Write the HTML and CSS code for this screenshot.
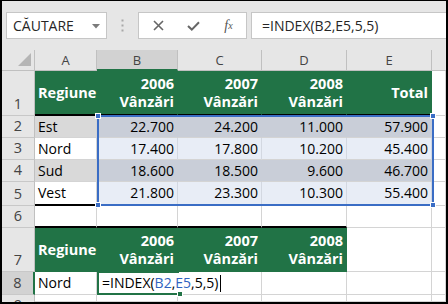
FILE: index.html
```html
<!DOCTYPE html>
<html>
<head>
<meta charset="utf-8">
<link rel="stylesheet" href="styles.css">
</head>
<body>
<div class="frame">
  <div class="toolbar">
    <div class="namebox">
      <span>CĂUTARE</span>
      <svg class="dd" width="8" height="5" viewBox="0 0 8 5"><path d="M0 0H8L4 4.5Z" fill="#7b7b7b"/></svg>
    </div>
    <div class="grip">
      <svg width="3" height="13" viewBox="0 0 3 13"><rect x="0.5" y="0.5" width="2" height="2" fill="#a8a8a8"/><rect x="0.5" y="5.5" width="2" height="2" fill="#a8a8a8"/><rect x="0.5" y="10.5" width="2" height="2" fill="#a8a8a8"/></svg>
    </div>
    <div class="fxbox">
      <span class="slot"><svg width="11" height="11" viewBox="0 0 11 11"><path d="M1 1L10 10M10 1L1 10" stroke="#666" stroke-width="1.6"/></svg></span>
      <span class="slot"><svg width="13" height="10" viewBox="0 0 13 10"><path d="M1 5L4.8 8.6L12 1.2" stroke="#666" stroke-width="2" fill="none"/></svg></span>
      <span class="slot fx">f<sub>x</sub></span>
    </div>
    <div class="formula">=INDEX(B2,E5,5,5)</div>
  </div>

  <div class="sheet">
    <!-- column headers -->
    <div class="corner"><svg width="14" height="14" viewBox="0 0 14 14"><path d="M13 0V13H0Z" fill="#b5b5b5"/></svg></div>
    <div class="hdr">A</div>
    <div class="hdr sel">B</div>
    <div class="hdr">C</div>
    <div class="hdr">D</div>
    <div class="hdr">E</div>
    <div class="hdr last"></div>

    <!-- row 1 -->
    <div class="rh">1</div>
    <div class="c g left tb">Regiune</div>
    <div class="c g num tb"><span class="two">2006<br>Vânzări</span></div>
    <div class="c g num tb"><span class="two">2007<br>Vânzări</span></div>
    <div class="c g num tb"><span class="two">2008<br>Vânzări</span></div>
    <div class="c g num tb">Total</div>
    <div class="c"></div>

    <!-- row 2 -->
    <div class="rh">2</div>
    <div class="c dk">Est</div>
    <div class="c num bd">22.700</div>
    <div class="c num bd">24.200</div>
    <div class="c num bd">11.000</div>
    <div class="c num bd">57.900</div>
    <div class="c"></div>

    <!-- row 3 -->
    <div class="rh">3</div>
    <div class="c">Nord</div>
    <div class="c num bl">17.400</div>
    <div class="c num bl">17.800</div>
    <div class="c num bl">10.200</div>
    <div class="c num bl">45.400</div>
    <div class="c"></div>

    <!-- row 4 -->
    <div class="rh">4</div>
    <div class="c dk">Sud</div>
    <div class="c num bd">18.600</div>
    <div class="c num bd">18.500</div>
    <div class="c num bd">9.600</div>
    <div class="c num bd">46.700</div>
    <div class="c"></div>

    <!-- row 5 -->
    <div class="rh">5</div>
    <div class="c tb">Vest</div>
    <div class="c num bl tb">21.800</div>
    <div class="c num bl tb">23.300</div>
    <div class="c num bl tb">10.300</div>
    <div class="c num bl tb">55.400</div>
    <div class="c"></div>

    <!-- row 6 -->
    <div class="rh">6</div>
    <div class="c tb"></div>
    <div class="c tb"></div>
    <div class="c tb"></div>
    <div class="c tb"></div>
    <div class="c"></div>
    <div class="c"></div>

    <!-- row 7 -->
    <div class="rh">7</div>
    <div class="c g left">Regiune</div>
    <div class="c g num"><span class="two">2006<br>Vânzări</span></div>
    <div class="c g num"><span class="two">2007<br>Vânzări</span></div>
    <div class="c g num"><span class="two">2008<br>Vânzări</span></div>
    <div class="c"></div>
    <div class="c"></div>

    <!-- row 8 -->
    <div class="rh rsel">8</div>
    <div class="c">Nord</div>
    <div class="c edit"><span class="edittext">=INDEX(<span class="ref">B2</span>,<span class="ref">E5</span>,5,5)<i class="caret"></i></span></div>
    <div class="c"></div>
    <div class="c"></div>
    <div class="c"></div>
    <div class="c"></div>

    <!-- row 9 -->
    <div class="rh cut">9</div>
    <div class="c"></div>
    <div class="c"></div>
    <div class="c"></div>
    <div class="c"></div>
    <div class="c"></div>
    <div class="c"></div>

    <!-- overlays -->
    <div class="range">
      <i class="h tl"></i><i class="h tr"></i><i class="h bl2"></i><i class="h br"></i>
    </div>
    <div class="active"><i class="fill"></i></div>
  </div>
</div>
</body>
</html>
```

FILE: styles.css
```css
* { box-sizing: border-box; margin: 0; padding: 0; }
body { margin: 0; background: #fff; font-family: "Open Sans", "Noto Sans", sans-serif; }

.frame {
  width: 448px; height: 304px;
  border: 2px solid #000; border-top-width: 1px;
  background: #fff; overflow: hidden;
  display: flex; flex-direction: column;
}

/* toolbar */
.toolbar {
  height: 49px; flex: none;
  background: #e6e6e6;
  display: flex; align-items: flex-start;
  padding: 11px 0 0 4px;
}
.namebox {
  width: 101px; height: 27px;
  background: #fff; border: 1px solid #c6c6c6;
  display: flex; align-items: center; justify-content: space-between;
  padding: 0 6px 0 6px;
  font-size: 14px; color: #262626;
}
.dd { margin-top: 1px; }
.grip { width: 31px; height: 27px; display: flex; align-items: center; justify-content: center; }
.fxbox {
  width: 109px; height: 27px;
  background: #fff; border: 1px solid #c6c6c6;
  display: flex; align-items: center; padding-left: 2px;
}
.slot { width: 35px; display: flex; justify-content: center; align-items: center; }
.fx {
  font-family: "Liberation Serif", serif; font-style: italic;
  font-size: 14px; color: #555; line-height: 1;
}
.fx sub { font-size: 10px; vertical-align: -1px; }
.formula {
  flex: 1; height: 27px; margin-left: 4px;
  background: #fff; border: 1px solid #c6c6c6; border-right: none;
  display: flex; align-items: center; padding-left: 10px;
  font-size: 14px; color: #262626;
}

/* sheet */
.sheet {
  position: relative;
  display: grid;
  grid-template-columns: 33px 62px 81px 84px 85px 85px 14px;
  grid-template-rows: 21px 45px 22px 22px 22px 24px 22px 44px 23px 7px;
  font-size: 14px; color: #000;
}
.corner {
  background: #e6e6e6;
  border-right: 1px solid #c0c0c0; border-bottom: 1px solid #c0c0c0;
  display: flex; align-items: flex-end; justify-content: flex-end;
  padding: 0 2px 3px 0;
}
.hdr {
  background: #e6e6e6;
  border-right: 1px solid #c0c0c0; border-bottom: 1px solid #c0c0c0;
  display: flex; align-items: center; justify-content: center;
  font-size: 13px; color: #444;
}
.hdr.sel { background: #d2d2d2; border-bottom: 2px solid #217346; }
.hdr.last { border-right: none; }
.rh {
  background: #e6e6e6;
  border-right: 1px solid #c0c0c0; border-bottom: 1px solid #c8c8c8;
  display: flex; align-items: flex-end; justify-content: center;
  padding-bottom: 1px; color: #444; line-height: 20px; font-size: 14.5px;
}
.rh.rsel { background: #d2d2d2; border-right: 2px solid #217346; }
.rh.cut { align-items: flex-start; overflow: hidden; padding: 0; border-bottom: none; }
.rh.cut::first-line { line-height: 20px; }

.c {
  border-right: 1px solid #d4d4d4; border-bottom: 1px solid #d4d4d4;
  display: flex; align-items: center;
  padding: 0 3px; white-space: nowrap; line-height: 20px;
}
.num { justify-content: flex-end; }
.g { background: #217346; color: #fff; font-weight: 700; font-size: 14.5px; border-right-color: #217346; border-bottom-color: #217346; }
.two { text-align: right; line-height: 18px; }
.dk { background: #d9d9d9; }
.bd { background: #c9ced8; border-right-color: #c9ced8; }
.bl { background: #e8edf6; border-right-color: #d3d8e1; }
.tb { border-bottom: 2px solid #000; }

.edit { overflow: visible; padding-left: 5px; }
.edittext { position: relative; z-index: 2; background: #fff; padding-right: 4px; display: flex; align-items: center; }
.ref { color: #2f63c0; }
.caret { display: inline-block; width: 1px; height: 17px; background: #000; margin-left: 2px; }

/* overlays */
.range {
  position: absolute; left: 95px; top: 65px; width: 337px; height: 91px;
  border: 2px solid #3a6dc5; z-index: 3;
}
.h { position: absolute; width: 6px; height: 6px; background: #3a6dc5; border: 1px solid #fff; }
.tl { left: -4px; top: -4px; }
.tr { right: -4px; top: -4px; }
.bl2 { left: -4px; bottom: -4px; }
.br { right: -4px; bottom: -4px; }

.active {
  position: absolute; left: 95px; top: 221px; width: 82px; height: 24px;
  border: 2px solid #217346; border-right: none; z-index: 3;
}
.fill { position: absolute; right: -4px; bottom: -4px; width: 6px; height: 6px; background: #217346; border: 1px solid #fff; }
```
